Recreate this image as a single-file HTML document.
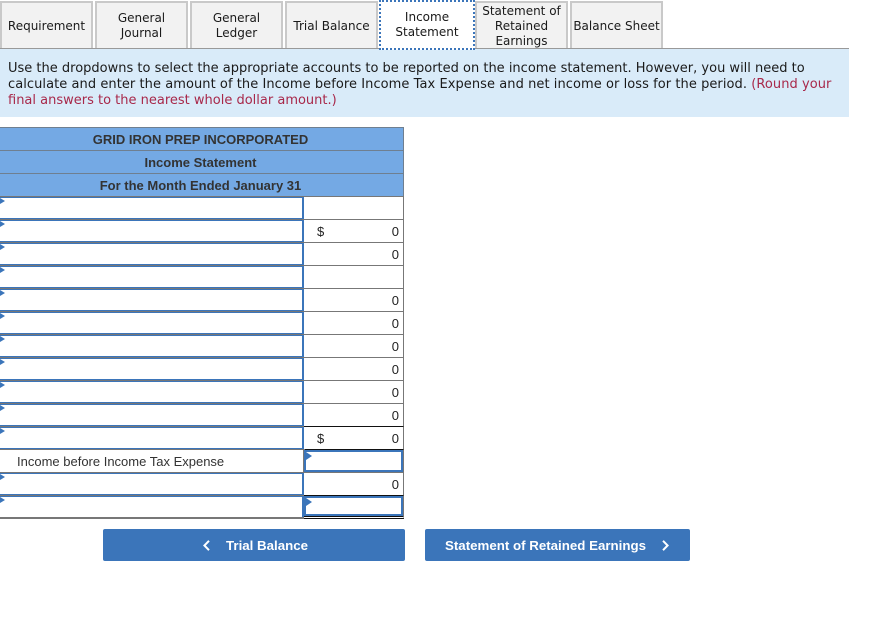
<!DOCTYPE html>
<html><head><meta charset="utf-8"><style>
html,body{margin:0;padding:0;background:#fff;width:871px;height:619px;overflow:hidden}
div{position:absolute;box-sizing:border-box}
.tab{top:1px;height:48px;width:93px;background:#f2f2f2;border:2px solid #c9c9c9;border-bottom:0;font:12px/15px "DejaVu Sans",Verdana,sans-serif;color:#1a1a1a;display:flex;align-items:center;justify-content:center;text-align:center;white-space:nowrap}
.h{left:0;width:404px;height:23px;background:#74a9e4;border:1px solid #6f7f90;border-left:0;border-bottom:0;font:bold 13px/23px "Liberation Sans",sans-serif;color:#333;text-align:center;padding-right:2px}
.g{left:0;width:304px;height:1px;background:#777}
.l{left:0;width:304px;height:22px;background:#fff;border:solid #3b75ba;border-width:1px 2px 1px 0}
.l:before{content:"";position:absolute;left:0;top:0;border-left:5px solid #3b75ba;border-top:3px solid transparent;border-bottom:3px solid transparent}
.r{left:304px;width:100px;height:24px;border:1px solid #777;border-left:0;font:13px/23px "Liberation Sans",sans-serif;color:#222;text-align:right;padding-right:4px}
.r span{position:absolute;left:13px;top:0}
.b{border-top-color:#111}
.i{left:304px;width:99px;height:22px;background:#fff;border:2px solid #3b75ba}
.i:before{content:"";position:absolute;left:0;top:0;border-left:6px solid #3b75ba;border-top:4px solid transparent;border-bottom:4px solid transparent}
.btn{top:529px;height:32px;background:#3b75ba;border-radius:2px;color:#fff;font:bold 13.3px/33px "Liberation Sans",sans-serif;white-space:nowrap}
svg{position:absolute}
</style></head><body>
<div class="tab" style="left:0">Requirement</div>
<div class="tab" style="left:95px">General<br>Journal</div>
<div class="tab" style="left:190px">General<br>Ledger</div>
<div class="tab" style="left:285px">Trial Balance</div>
<div class="tab" style="left:475px">Statement of<br>Retained<br>Earnings</div>
<div class="tab" style="left:570px">Balance Sheet</div>
<div style="left:0;top:48px;width:849px;height:69px;background:#d9ebf9;border-top:1px solid #999;padding:12px 0 0 8px;font:13px/16px 'DejaVu Sans',Verdana,sans-serif;color:#1a1a1a;white-space:nowrap">Use the dropdowns to select the appropriate accounts to be reported on the income statement. However, you will need to<br><span style="letter-spacing:.06px">calculate and enter the amount of the Income before Income Tax Expense and net income or loss for the period. <span style="color:#a8284a">(Round your</span></span><br><span style="color:#a8284a">final answers to the nearest whole dollar amount.)</span></div>
<div class="tab" style="left:379px;top:0;width:96px;height:50px;background:#fff;border:2px dotted #3b75ba">Income<br>Statement</div>

<div class="h" style="top:127px">GRID IRON PREP INCORPORATED</div>
<div class="h" style="top:150px">Income Statement</div>
<div class="h" style="top:173px">For the Month Ended January 31</div>

<div class="r" style="top:196px"></div>
<div class="r" style="top:219px"><span>$</span>0</div>
<div class="r" style="top:242px">0</div>
<div class="r" style="top:265px"></div>
<div class="r" style="top:288px">0</div>
<div class="r" style="top:311px">0</div>
<div class="r" style="top:334px">0</div>
<div class="r" style="top:357px">0</div>
<div class="r" style="top:380px">0</div>
<div class="r" style="top:403px">0</div>
<div class="r b" style="top:426px"><span>$</span>0</div>
<div class="r b" style="top:449px"></div>
<div class="r" style="top:472px">0</div>
<div class="r b" style="top:495px;height:24px;border-bottom:3px double #111;border-right:1px solid #777"></div>

<div class="g" style="top:196px"></div><div class="l" style="top:197px"></div>
<div class="g" style="top:219px"></div><div class="l" style="top:220px"></div>
<div class="g" style="top:242px"></div><div class="l" style="top:243px"></div>
<div class="g" style="top:265px"></div><div class="l" style="top:266px"></div>
<div class="g" style="top:288px"></div><div class="l" style="top:289px"></div>
<div class="g" style="top:311px"></div><div class="l" style="top:312px"></div>
<div class="g" style="top:334px"></div><div class="l" style="top:335px"></div>
<div class="g" style="top:357px"></div><div class="l" style="top:358px"></div>
<div class="g" style="top:380px"></div><div class="l" style="top:381px"></div>
<div class="g" style="top:403px"></div><div class="l" style="top:404px"></div>
<div class="g" style="top:426px"></div><div class="l" style="top:427px"></div>
<div style="left:0;top:449px;width:305px;height:23px;background:#fff;border-top:1px solid #777;border-right:2px solid #777;padding-left:17px;font:13px/24px 'Liberation Sans',sans-serif;color:#333;white-space:nowrap">Income before Income Tax Expense</div>
<div class="g" style="top:472px"></div><div class="l" style="top:473px"></div>
<div class="g" style="top:495px"></div><div class="l" style="top:496px"></div>
<div class="g" style="top:517px;height:2px"></div>
<div class="i" style="top:450px"></div>
<div class="i" style="top:496px;height:20px"></div>

<div class="btn" style="left:103px;width:302px"><svg style="left:99px;top:11px" width="9" height="11" viewBox="0 0 9 11"><path d="M7 0.8 L2.4 5.5 L7 10.2" fill="none" stroke="#fff" stroke-width="2"/></svg><div style="left:123px;top:0">Trial Balance</div></div>
<div class="btn" style="left:425px;width:265px"><div style="left:20px;top:0">Statement of Retained Earnings</div><svg style="left:236px;top:11px" width="9" height="11" viewBox="0 0 9 11"><path d="M2 0.8 L6.6 5.5 L2 10.2" fill="none" stroke="#fff" stroke-width="2"/></svg></div>
</body></html>
